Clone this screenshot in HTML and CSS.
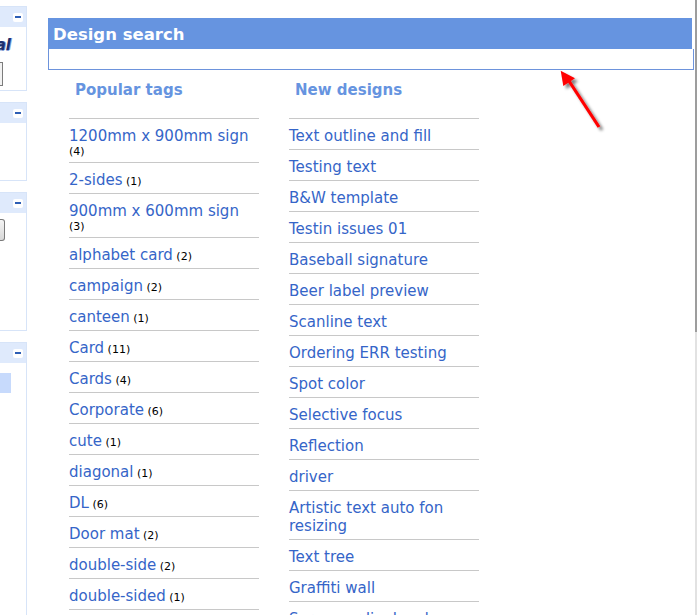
FILE: index.html
```html
<!DOCTYPE html>
<html>
<head>
<meta charset="utf-8">
<link rel="stylesheet" href="styles.css">
</head>
<body>
<div class="page">
  <aside class="sidebar">
    <div class="sb-panel p1">
      <div class="sb-head"><span class="sb-min"><i></i></span></div>
      <div class="sb-body">
        <div class="logo-text"><span>Digital</span></div>
        <div class="sb-input"></div>
      </div>
    </div>
    <div class="sb-panel p2">
      <div class="sb-head"><span class="sb-min"><i></i></span></div>
      <div class="sb-body"></div>
    </div>
    <div class="sb-panel p3">
      <div class="sb-head"><span class="sb-min"><i></i></span></div>
      <div class="sb-body">
        <div class="sb-button"></div>
      </div>
    </div>
    <div class="sb-panel p4">
      <div class="sb-head"><span class="sb-min"><i></i></span></div>
      <div class="sb-body">
        <div class="sb-selected"></div>
      </div>
    </div>
  </aside>

  <main class="main">
    <div class="search-title">Design search</div>
    <div class="search-box"></div>

    <div class="cols">
      <section class="col">
        <h2 class="col-title">Popular tags</h2>
        <ul class="list">
          <li><a href="#">1200mm x 900mm sign</a> <span class="count">(4)</span></li>
          <li><a href="#">2-sides</a> <span class="count">(1)</span></li>
          <li><a href="#">900mm x 600mm sign</a> <span class="count">(3)</span></li>
          <li><a href="#">alphabet card</a> <span class="count">(2)</span></li>
          <li><a href="#">campaign</a> <span class="count">(2)</span></li>
          <li><a href="#">canteen</a> <span class="count">(1)</span></li>
          <li><a href="#">Card</a> <span class="count">(11)</span></li>
          <li><a href="#">Cards</a> <span class="count">(4)</span></li>
          <li><a href="#">Corporate</a> <span class="count">(6)</span></li>
          <li><a href="#">cute</a> <span class="count">(1)</span></li>
          <li><a href="#">diagonal</a> <span class="count">(1)</span></li>
          <li><a href="#">DL</a> <span class="count">(6)</span></li>
          <li><a href="#">Door mat</a> <span class="count">(2)</span></li>
          <li><a href="#">double-side</a> <span class="count">(2)</span></li>
          <li><a href="#">double-sided</a> <span class="count">(1)</span></li>
        </ul>
      </section>
      <section class="col">
        <h2 class="col-title">New designs</h2>
        <ul class="list">
          <li><a href="#">Text outline and fill</a></li>
          <li><a href="#">Testing text</a></li>
          <li><a href="#">B&amp;W template</a></li>
          <li><a href="#">Testin issues 01</a></li>
          <li><a href="#">Baseball signature</a></li>
          <li><a href="#">Beer label preview</a></li>
          <li><a href="#">Scanline text</a></li>
          <li><a href="#">Ordering ERR testing</a></li>
          <li><a href="#">Spot color</a></li>
          <li><a href="#">Selective focus</a></li>
          <li><a href="#">Reflection</a></li>
          <li><a href="#">driver</a></li>
          <li><a href="#">Artistic text auto fon resizing</a></li>
          <li><a href="#">Text tree</a></li>
          <li><a href="#">Graffiti wall</a></li>
          <li><a href="#">Screen ordinal code</a></li>
        </ul>
      </section>
    </div>
  </main>

  <div class="gutter"></div>
  <div class="edge"><div class="edge-thumb"></div></div>

  <svg class="arrow" width="60" height="72" viewBox="0 0 60 72" xmlns="http://www.w3.org/2000/svg">
    <defs>
      <filter id="sh" x="-30%" y="-30%" width="160%" height="160%">
        <feGaussianBlur in="SourceAlpha" stdDeviation="1.6"/>
        <feOffset dx="2.5" dy="2.5" result="b"/>
        <feComponentTransfer><feFuncA type="linear" slope="0.5"/></feComponentTransfer>
        <feMerge><feMergeNode/><feMergeNode in="SourceGraphic"/></feMerge>
      </filter>
    </defs>
    <g filter="url(#sh)">
      <line x1="14" y1="16" x2="44" y2="62" stroke="#ff0000" stroke-width="3.2" stroke-linecap="butt"/>
      <polygon points="5.7,5.7 20,13.3 8.3,21" fill="#ff0000"/>
    </g>
  </svg>
</div>
</body>
</html>
```

FILE: styles.css
```css
* { box-sizing: border-box; }

html, body {
  margin: 0;
  padding: 0;
  background: #ffffff;
  overflow: hidden;
}

body {
  font-family: "DejaVu Sans", Verdana, sans-serif;
  width: 697px;
  height: 615px;
}

.page {
  position: relative;
  display: flex;
  align-items: flex-start;
  width: 697px;
  height: 615px;
  overflow: hidden;
}

/* ---------- left sidebar (mostly scrolled out of view) ---------- */
.sidebar {
  width: 27px;
  flex: 0 0 27px;
  display: flex;
  flex-direction: column;
  gap: 11px;
  padding-top: 6px;
  overflow: hidden;
}

.sb-panel {
  border: 1px solid #d7e4f8;
  border-left: none;
  background: #ffffff;
}

.sb-head {
  height: 20px;
  background: #dfeafc;
  display: flex;
  align-items: center;
  justify-content: flex-end;
  padding-right: 3px;
}

.sb-min {
  width: 10px;
  height: 9px;
  background: #ffffff;
  border-radius: 2px;
  display: flex;
  align-items: center;
  justify-content: center;
}

.sb-min i {
  display: block;
  width: 6px;
  height: 2px;
  background: #2d5eb5;
}

.sb-body {
  position: relative;
  overflow: hidden;
}

.p1 .sb-body { height: 63px; }
.p2 .sb-body { height: 57px; }
.p3 .sb-body { height: 117px; }
.p4 .sb-body { height: 300px; }

.logo-text {
  display: flex;
  justify-content: flex-end;
  margin-top: 10px;
  padding-right: 15px;
  font-family: "DejaVu Sans", sans-serif;
  font-weight: bold;
  font-style: italic;
  font-size: 15px;
  line-height: 16px;
  color: #1b2f6e;
  white-space: nowrap;
  text-shadow: 1px 0 0 #8aa3d6, 0 1px 0 #8aa3d6;
}

.logo-text span {
  flex: 0 0 auto;
}

.sb-input {
  margin-top: 9px;
  width: 3px;
  height: 24px;
  border: 1px solid #7c7c7c;
  border-left: none;
  background: #f2f2f2;
}

.sb-button {
  margin-top: 6px;
  width: 5px;
  height: 22px;
  border: 1px solid #7a7a7a;
  border-left: none;
  border-radius: 0 3px 3px 0;
  background: linear-gradient(#f4f4f4, #d8d8d8);
}

.sb-selected {
  margin-top: 10px;
  width: 11px;
  height: 20px;
  background: #c7dafc;
}

/* ---------- main content ---------- */
.main {
  margin-left: 21px;
  margin-top: 18px;
  width: 646px;
  flex: 0 0 646px;
}

.search-title {
  width: 644px;
  height: 31px;
  background: #6694e0;
  color: #ffffff;
  font-weight: bold;
  font-size: 16.5px;
  line-height: 33px;
  padding-left: 5px;
  white-space: nowrap;
}

.search-box {
  height: 21px;
  border: 1px solid #6d93dc;
  border-top: none;
  background: #ffffff;
}

.cols {
  display: flex;
  gap: 30px;
  padding-left: 21px;
}

.col {
  width: 190px;
  flex: 0 0 190px;
}

.col-title {
  margin: 11px 0 19px 6px;
  font-size: 15px;
  line-height: 18px;
  font-weight: bold;
  color: #6694e0;
  white-space: nowrap;
}

.list {
  list-style: none;
  margin: 0;
  padding: 0;
  border-top: 1px solid #c8c8c8;
}

.list li {
  font-size: 11px;
  line-height: 13px;
  padding: 8px 6px 4px 0;
  border-bottom: 1px solid #c8c8c8;
  color: #000000;
}

.list a {
  font-size: 15px;
  line-height: 18px;
  color: #3565c8;
  text-decoration: none;
}

.count {
  font-size: 11px;
  color: #000000;
  white-space: nowrap;
}

/* ---------- right edge ---------- */
.gutter {
  flex: 1 1 auto;
}

.edge {
  width: 2px;
  flex: 0 0 2px;
  height: 615px;
  background: #e2e2e2;
}

.edge-thumb {
  height: 332px;
  background: #9d9d9d;
}

/* ---------- annotation arrow ---------- */
.arrow {
  position: absolute;
  left: 555px;
  top: 65px;
}
```
